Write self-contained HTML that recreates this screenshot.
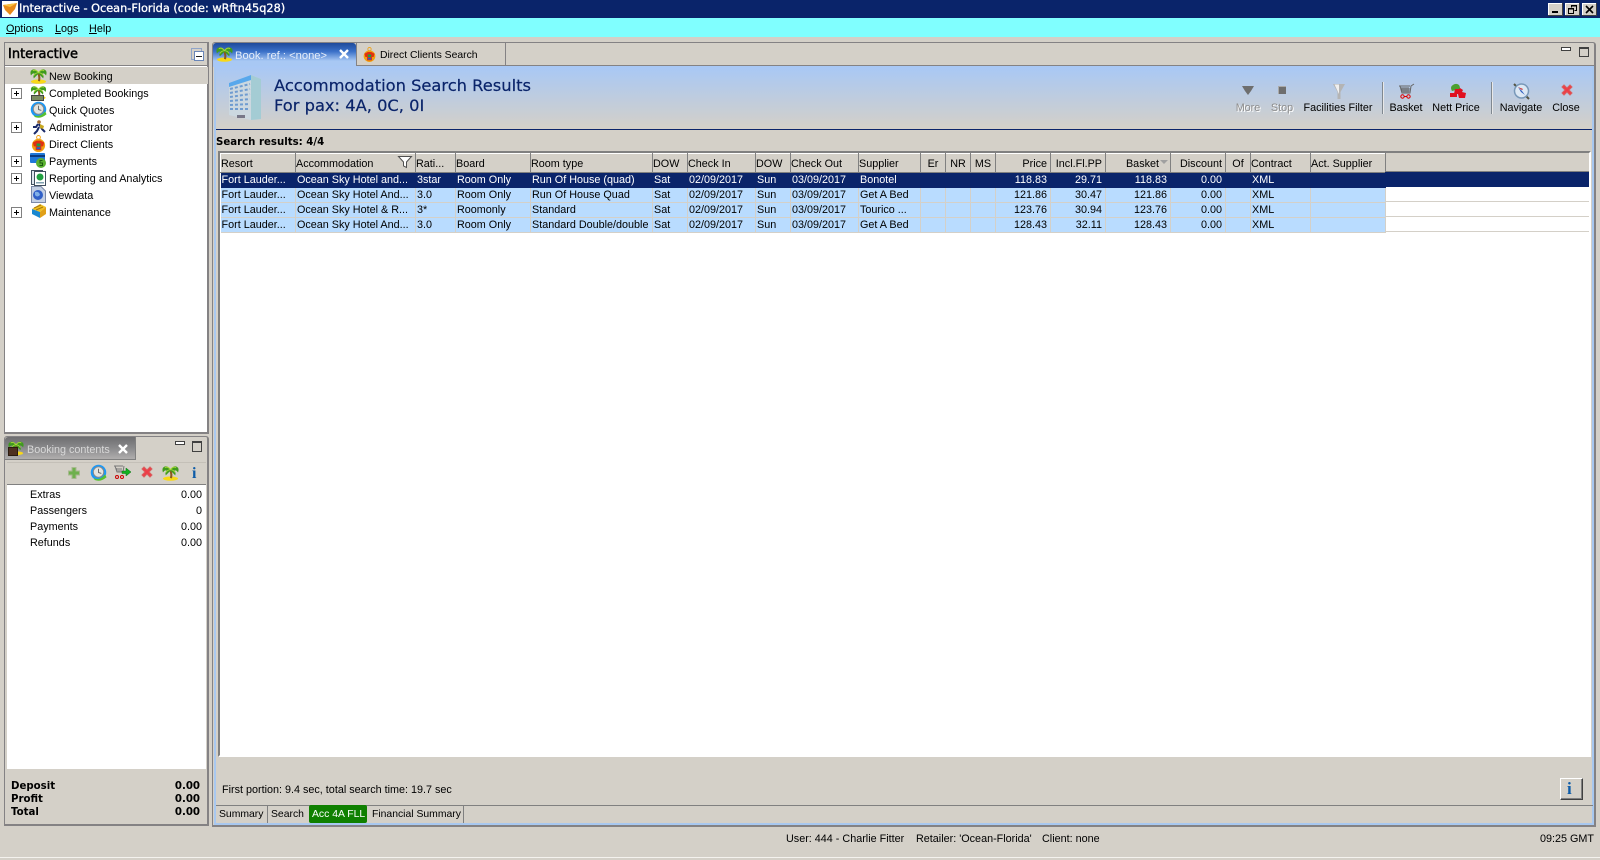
<!DOCTYPE html>
<html><head><meta charset="utf-8"><title>Interactive</title>
<style>
html,body{margin:0;padding:0;width:1600px;height:860px;overflow:hidden;background:#d4d0c8}
body{position:relative;font:10.8px "Liberation Sans",Arial,sans-serif;color:#000}
.a,.t{position:absolute}
.t{white-space:nowrap;line-height:14px;margin-top:1px}
.m0{margin-top:0}
u{text-decoration:underline}
.nav{left:49px}
.plus{position:absolute;left:11px;width:9px;height:9px;border:1px solid #808080;background:#fff}
.plus:before{content:"";position:absolute;left:2px;top:4px;width:5px;height:1px;background:#000}
.plus:after{content:"";position:absolute;left:4px;top:2px;width:1px;height:5px;background:#000}
.r{text-align:right}
.tb{font-size:10.4px}
svg{position:absolute;overflow:visible}
table{position:absolute;left:220px;top:153px;border-collapse:collapse;table-layout:fixed;width:1165px;font:10.8px "Liberation Sans",sans-serif}
th{height:19px;padding:2px 0 0 0;background:#d4d0c8;font-weight:normal;text-align:left;border:1px solid;border-color:#fff #808080 #808080 #fff;box-sizing:border-box;white-space:nowrap;overflow:hidden}
td{height:15px;padding:0 2px 0 1px;background:#b9dcff;border-right:1px solid #d4d0c8;border-bottom:1px solid #d4d0c8;box-sizing:border-box;white-space:nowrap;overflow:hidden;line-height:14px}
tr.s td{background:#0a246a;color:#fff;border-color:#0a246a}
th.n,td.n{text-align:right;padding-right:3px}
th.c{text-align:center;padding:2px 0 0 0}
.lab{position:absolute;top:101px;text-align:center;width:100px;line-height:14px}
.dis{color:#8d8d8d;text-shadow:1px 1px 0 #fff}
.b{font:bold 10.2px/14px 'DejaVu Sans',sans-serif}
</style></head><body>
<svg width="0" height="0" style="position:absolute"><defs>
<symbol id="palm" viewBox="0 0 18 18"><ellipse cx="9" cy="15.500" rx="8" ry="2.200" fill="#f8d818"/><path d="M9 7Q10.500 11 9.500 15" stroke="#8a5a20" stroke-width="2.200" fill="none"/><path d="M9 6Q5 0 1 4Q0 6 1 9Q3 6 5 7Q3 9 4 12Q7 9 9 7Q11 9 14 12Q15 9 13 7Q15 6 17 9Q18 6 17 4Q13 0 9 6Z" fill="#3f9a1e"/><path d="M9 6Q6 2 3 4M9 6Q12 2 15 4M9 6Q6 6 4 9M9 6Q12 6 14 9" stroke="#a8d838" stroke-width="1" fill="none"/></symbol>
<symbol id="clock" viewBox="0 0 18 18"><circle cx="9" cy="9" r="8.200" fill="#1e98f4"/><circle cx="9" cy="8.500" r="5.500" fill="#e4e4e0" stroke="#888"/><path d="M9 5V9L12 10" stroke="#666" fill="none"/><path d="M4 15Q10 18 16 11L17.500 14Q11 19.500 5 17Z" fill="#58c030"/></symbol>
<symbol id="xr" viewBox="0 0 14 14"><path d="M2 4L4 2L7 5L10 2L12 4L9 7L12 10L10 12L7 9L4 12L2 10L5 7Z" fill="#ee3c46" stroke="#d86060"/></symbol>
<symbol id="shirt" viewBox="0 0 18 18"><circle cx="9" cy="2.500" r="2" fill="none" stroke="#f0a010"/><circle cx="9" cy="11" r="7" fill="#f0a010"/><path d="M3 8L7 6H11L15 8L14 12H12V16H6V12H4Z" fill="#e03010"/><rect x="7" y="9" width="4" height="3" fill="#1ea040"/><rect x="7" y="13" width="4" height="2" fill="#2060d0"/></symbol>
</defs></svg>

<!-- title bar -->
<div class="a" style="left:0;top:0;width:1600px;height:18px;background:#0a246a"></div>
<div class="a" style="left:2px;top:1px;width:16px;height:16px;background:#fff"></div>
<svg style="left:2px;top:2px" width="16" height="14"><path d="M1 3L15 1L13 7L8 13L3 8Z" fill="#e88a1a"/><path d="M1 3L15 1L8 5Z" fill="#f8c040"/></svg>
<div class="t m0" style="left:19px;top:2px;color:#fff;font:11.3px/14px 'DejaVu Sans',sans-serif;-webkit-text-stroke:.3px #fff">Interactive - Ocean-Florida (code: wRftn45q28)</div>
<div class="a" style="left:1548px;top:3px;width:15px;height:13px;background:#d4d0c8;border-right:1px solid #404040;border-bottom:1px solid #404040;box-sizing:border-box;box-shadow:inset 1px 1px #fff"></div>
<div class="a" style="left:1552px;top:11px;width:6px;height:2px;background:#000"></div>
<div class="a" style="left:1565px;top:3px;width:15px;height:13px;background:#d4d0c8;border-right:1px solid #404040;border-bottom:1px solid #404040;box-sizing:border-box;box-shadow:inset 1px 1px #fff"></div>
<svg style="left:1568px;top:5px" width="10" height="9"><path d="M3.500 2.500V.5H8.500V5.500H6.500M.5 3.500H5.500V8.500H.5Z" fill="none" stroke="#000"/><path d="M3 1H9M0 4H6" stroke="#000"/></svg>
<div class="a" style="left:1582px;top:3px;width:15px;height:13px;background:#d4d0c8;border-right:1px solid #404040;border-bottom:1px solid #404040;box-sizing:border-box;box-shadow:inset 1px 1px #fff"></div>
<svg style="left:1585px;top:5px" width="9" height="9"><path d="M1 1L8 8M8 1L1 8" stroke="#000" stroke-width="1.600"/></svg>

<!-- menu -->
<div class="a" style="left:0;top:18px;width:1600px;height:19px;background:#80ffff"></div>
<div class="t" style="left:6px;top:21px"><u>O</u>ptions</div>
<div class="t" style="left:55px;top:21px"><u>L</u>ogs</div>
<div class="t" style="left:89px;top:21px"><u>H</u>elp</div>

<!-- left nav panel -->
<div class="a" style="left:4px;top:42px;width:205px;height:392px;border:1px solid #848284;border-width:1px 2px 2px 1px;box-sizing:border-box;background:#fff"></div>
<div class="a" style="left:5px;top:43px;width:202px;height:22px;background:#d4d0c8;border-bottom:1px solid #848284"></div>
<div class="t" style="left:8px;top:46px;font:13px/15px 'DejaVu Sans',sans-serif;-webkit-text-stroke:.45px #000">Interactive</div>
<div class="a" style="left:191px;top:48px;width:9px;height:10px;border:1px solid #8fa4c8"></div>
<div class="a" style="left:194px;top:51px;width:8px;height:8px;border:1px solid #6a86b8;background:#fff"></div>
<div class="a" style="left:196px;top:56px;width:6px;height:1px;background:#222"></div>
<div class="a" style="left:5px;top:67px;width:203px;height:17px;background:#d4d0c8"></div>

<svg style="left:30px;top:67px" width="17" height="17"><use href="#palm"/></svg>
<div class="t nav" style="top:69px">New Booking</div>
<div class="plus" style="top:88px"></div>
<svg style="left:30px;top:84px" width="17" height="16"><use href="#palm"/></svg>
<div class="a" style="left:31px;top:95px;width:13px;height:6px;background:#7a8a60;border:1px solid #444;box-sizing:border-box"></div>
<div class="t nav" style="top:86px">Completed Bookings</div>
<svg style="left:30px;top:101px" width="17" height="17"><use href="#clock"/></svg>
<div class="t nav" style="top:103px">Quick Quotes</div>
<div class="plus" style="top:122px"></div>
<svg style="left:31px;top:119px" width="16" height="16"><circle cx="8" cy="3" r="1.800" fill="#a06a30"/><path d="M7 5L5 8L2 8M8 5L11 10L14 13M8 8L6 12L3 15" stroke="#1a2a6a" stroke-width="2" fill="none"/><path d="M9 5L13 7L12 10L9 9Z" fill="#c8a820"/></svg>
<div class="t nav" style="top:120px">Administrator</div>
<svg style="left:30px;top:135px" width="17" height="17"><use href="#shirt"/></svg>
<div class="t nav" style="top:137px">Direct Clients</div>
<div class="plus" style="top:156px"></div>
<svg style="left:30px;top:152px" width="17" height="17"><rect y="1" width="15" height="10" rx="1" fill="#1f78d8"/><rect y="3" width="15" height="2" fill="#0a3a80"/><circle cx="11" cy="11" r="5" fill="#5ab030"/><path d="M12.500 8.500H10V11H12.500V13.500H9.500" stroke="#1a5a10" fill="none"/></svg>
<div class="t nav" style="top:154px">Payments</div>
<div class="plus" style="top:173px"></div>
<svg style="left:31px;top:170px" width="16" height="16"><rect x=".5" y=".5" width="11" height="14" fill="#dfe6ee" stroke="#405060"/><rect x="3.500" y="1.500" width="11" height="14" fill="#fff" stroke="#405060"/><circle cx="9" cy="7" r="3.500" fill="#20a040"/><rect x="5" y="12" width="8" height="1.500" fill="#80a0b0"/></svg>
<div class="t nav" style="top:171px">Reporting and Analytics</div>
<svg style="left:31px;top:186px" width="15" height="17"><path d="M.5.5H10L14.500 5V16.500H.5Z" fill="#c4d0e4" stroke="#7c8aa8"/><circle cx="7" cy="9" r="5" fill="#3060c8"/><path d="M4 6Q8 5 9 9Q6 12 4 9Z" fill="#80b0e8"/></svg>
<div class="t nav" style="top:188px">Viewdata</div>
<div class="plus" style="top:207px"></div>
<svg style="left:31px;top:203px" width="17" height="17"><path d="M1 6L9 1L15 4L9 9Z" fill="#f0c020"/><path d="M1 6V11L9 15V9Z" fill="#1a88d0"/><path d="M9 9V15L15 11V4Z" fill="#e0a018"/><path d="M3 5L10 2M5 7L12 4" stroke="#a87810"/></svg>
<div class="t nav" style="top:205px">Maintenance</div>

<!-- booking panel -->
<div class="a" style="left:4px;top:436px;width:205px;height:390px;border:1px solid #848284;border-width:1px 2px 2px 1px;box-sizing:border-box;background:#d4d0c8;border-radius:3px 3px 0 0"></div>
<div class="a" style="left:5px;top:437px;width:131px;height:23px;background:linear-gradient(#6e6e70,#8a8a8c 50%,#b0aeae);border-right:1px solid #808080;border-bottom:1px solid #808080;box-sizing:border-box;border-radius:3px 0 0 0"></div>
<svg style="left:8px;top:439px" width="16" height="17"><use href="#palm"/></svg>
<div class="a" style="left:8px;top:447px;width:10px;height:9px;background:#4e3020;border:1px solid #2c1c10;box-sizing:border-box"></div>
<div class="t" style="left:27px;top:442px;color:#d8d8d8">Booking contents</div>
<svg style="left:118px;top:444px" width="10" height="10"><path d="M1 1L9 9M9 1L1 9" stroke="#fff" stroke-width="2.400"/></svg>
<div class="a" style="left:175px;top:441px;width:8px;height:2px;border:1px solid #404040;background:#fff"></div>
<div class="a" style="left:192px;top:441px;width:8px;height:8px;border:1px solid #404040;border-top-width:2px;background:#d4d0c8"></div>
<div class="a" style="left:7px;top:462px;width:199px;height:23px;background:#d4d0c8;box-shadow:inset 0 -1px #808080,inset 0 1px #c4c0b8"></div>
<svg style="left:67px;top:466px" width="14" height="14"><path d="M5 1.500H9V5H12.500V9H9V12.500H5V9H1.500V5H5Z" fill="#6fb04e" stroke="#a8b890"/></svg>
<svg style="left:90px;top:464px" width="17" height="17"><use href="#clock"/></svg>
<svg style="left:114px;top:465px" width="17" height="15"><path d="M0 1H9M1 1L3 7H9L10 1M3 3V7M5 3V7M7 3V7" stroke="#777" fill="none"/><circle cx="3" cy="12" r="1.500" fill="none" stroke="#c00"/><circle cx="8" cy="12" r="1.500" fill="none" stroke="#c00"/><path d="M8 6H12V3L17 7L12 11V8.500H8Z" fill="#10b020" stroke="#0a7010" stroke-width=".5"/></svg>
<svg style="left:140px;top:465px" width="14" height="14"><use href="#xr"/></svg>
<svg style="left:162px;top:464px" width="17" height="17"><use href="#palm"/></svg>
<div class="t m0" style="left:192px;top:465px;font:bold 16px/17px 'Liberation Serif',serif;color:#0e5ca8">i</div>
<div class="a" style="left:7px;top:485px;width:199px;height:284px;background:#fff"></div>
<div class="t" style="left:30px;top:487px">Extras</div><div class="t r" style="right:1398px;top:487px">0.00</div>
<div class="t" style="left:30px;top:503px">Passengers</div><div class="t r" style="right:1398px;top:503px">0</div>
<div class="t" style="left:30px;top:519px">Payments</div><div class="t r" style="right:1398px;top:519px">0.00</div>
<div class="t" style="left:30px;top:535px">Refunds</div><div class="t r" style="right:1398px;top:535px">0.00</div>
<div class="t b" style="left:11px;top:779px">Deposit</div><div class="t r b" style="right:1400px;top:779px">0.00</div>
<div class="t b" style="left:11px;top:792px">Profit</div><div class="t r b" style="right:1400px;top:792px">0.00</div>
<div class="t b" style="left:11px;top:805px">Total</div><div class="t r b" style="right:1400px;top:805px">0.00</div>

<!-- main panel -->
<div class="a" style="left:212px;top:42px;width:1384px;height:785px;border:1px solid #848284;border-width:1px 2px 2px 1px;box-sizing:border-box;background:#d4d0c8;border-radius:3px 3px 0 0"></div>
<div class="a" style="left:214px;top:66px;width:2px;height:758px;background:#a8c8f0"></div>
<div class="a" style="left:1592px;top:66px;width:2px;height:758px;background:#a8c8f0"></div>
<div class="a" style="left:214px;top:823px;width:1380px;height:2px;background:#a8c8f0"></div>
<div class="a" style="left:213px;top:65px;width:1381px;height:1px;background:#848284"></div>
<!-- tabs -->
<div class="a" style="left:213px;top:43px;width:143px;height:24px;background:linear-gradient(#1f4a9a,#3a70c8 35%,#a8c8f4 75%);border-radius:3px 3px 0 0"></div>
<svg style="left:216px;top:45px" width="17" height="17"><use href="#palm"/></svg>
<div class="t" style="left:235px;top:48px;color:#e6eefa;font-size:11.2px">Book. ref.: &lt;none&gt;</div>
<svg style="left:339px;top:49px" width="10" height="10"><path d="M1 1L9 9M9 1L1 9" stroke="#fff" stroke-width="2.400"/></svg>
<div class="a" style="left:356px;top:43px;width:150px;height:22px;border-right:1px solid #848284;box-sizing:border-box"></div>
<div class="a" style="left:356px;top:43px;width:1px;height:23px;background:#848284"></div>
<svg style="left:362px;top:46px" width="15" height="17"><use href="#shirt"/></svg>
<div class="t tb" style="left:380px;top:48px">Direct Clients Search</div>
<div class="a" style="left:1561px;top:47px;width:8px;height:2px;border:1px solid #404040;background:#fff"></div>
<div class="a" style="left:1579px;top:47px;width:8px;height:7px;border:1px solid #404040;border-top-width:2px;background:#d4d0c8"></div>
<!-- header band -->
<div class="a" style="left:216px;top:66px;width:1376px;height:63px;background:linear-gradient(#a8c8f6,#d4d0c8)"></div>
<div class="a" style="left:216px;top:129px;width:1376px;height:1px;background:#0a246a"></div>
<svg style="left:227px;top:73px" width="36" height="48"><path d="M2 10L24 2L34 6V46L24 47L2 42Z" fill="#ccd8e0"/><path d="M24 2L34 6V46L24 47Z" fill="#a4ccd4"/><path d="M2 10L24 2V7L2 14Z" fill="#58a8ec"/><g stroke="#6f9cd0" stroke-width="2" stroke-dasharray="3 2"><path d="M3 16L23 11M3 20L23 16M3 24L23 21M3 28L23 26M3 32L23 31M3 36L23 36"/></g><path d="M10 42H18V45H10Z" fill="#778"/></svg>
<div class="t m0" style="left:274px;top:76px;font:16.300px/19px 'DejaVu Sans',sans-serif;color:#0a246a;-webkit-text-stroke:.2px #0a246a">Accommodation Search Results</div>
<div class="t m0" style="left:274px;top:96px;font:16.300px/19px 'DejaVu Sans',sans-serif;color:#0a246a;-webkit-text-stroke:.2px #0a246a">For pax: 4A, 0C, 0I</div>
<!-- toolbar -->
<svg style="left:1241px;top:84px" width="14" height="12"><path d="M1 2H13L10 7L7 11L4 7Z" fill="#6e6e6e"/></svg>
<div class="a" style="left:1278px;top:86px;width:8px;height:8px;background:#6e6e6e;box-shadow:inset 1px 1px #aaa"></div>
<svg style="left:1332px;top:83px" width="14" height="17"><path d="M1 1H13L8.500 9V16H5.500V9Z" fill="#b4b4b4"/><path d="M2.500 1.500H7L7 11Z" fill="#f0f0f0"/></svg>
<svg style="left:1399px;top:83px" width="16" height="17"><path d="M0 3H11M1 3L3 10H11L12 3L15 1M3 4V10M5 4V10M7 4V10M9 4V10M3 8H11M2 6H12" stroke="#666" fill="none"/><circle cx="3.500" cy="13.500" r="1.700" fill="none" stroke="#d00"/><circle cx="9.500" cy="13.500" r="1.700" fill="none" stroke="#d00"/><path d="M5 13.500H8" stroke="#d00"/></svg>
<svg style="left:1449px;top:83px" width="18" height="17"><path d="M3 8Q0 3 6 1Q11 0 11 6Z" fill="#4ca030"/><path d="M6 6H10L11 5L14 7L13 9L17 10L16 15H10L9 11H5Z" fill="#e01020"/><rect x="1" y="10" width="7" height="4" fill="#e01020"/></svg>
<svg style="left:1513px;top:82px" width="17" height="18"><path d="M1 2L4 5M13 14L16 17" stroke="#554" stroke-width="2"/><circle cx="8.500" cy="9" r="7" fill="#dce8f4" stroke="#7898b8" stroke-width="1.500"/><path d="M5 5L9 9L12 13L8 10Z" fill="#3060c0"/><path d="M5 5L9 8L10 7Z" fill="#d02020"/></svg>
<svg style="left:1560px;top:83px" width="14" height="14"><use href="#xr"/></svg>
<div class="lab dis" style="left:1198px">More</div>
<div class="lab dis" style="left:1232px">Stop</div>
<div class="lab" style="left:1288px">Facilities Filter</div>
<div class="lab" style="left:1356px">Basket</div>
<div class="lab" style="left:1406px">Nett Price</div>
<div class="lab" style="left:1471px">Navigate</div>
<div class="lab" style="left:1516px">Close</div>
<div class="a" style="left:1382px;top:82px;width:1px;height:32px;background:#808890;box-shadow:1px 0 #e8e8e8"></div>
<div class="a" style="left:1491px;top:82px;width:1px;height:32px;background:#808890;box-shadow:1px 0 #e8e8e8"></div>

<div class="t b" style="left:216px;top:135px">Search results: 4/4</div>

<!-- grid -->
<div class="a" style="left:218px;top:151px;width:1373px;height:606px;background:#fff;border:2px solid;border-color:#808080 #fff #fff #808080;box-sizing:border-box;outline:1px solid #d4d0c8"></div>
<div class="a" style="left:220px;top:153px;width:1369px;height:19px;background:#d4d0c8;border-bottom:1px solid #808080;box-sizing:border-box"></div>
<table><colgroup><col style="width:75px"><col style="width:120px"><col style="width:40px"><col style="width:75px"><col style="width:122px"><col style="width:35px"><col style="width:68px"><col style="width:35px"><col style="width:68px"><col style="width:62px"><col style="width:25px"><col style="width:25px"><col style="width:25px"><col style="width:55px"><col style="width:55px"><col style="width:65px"><col style="width:55px"><col style="width:25px"><col style="width:60px"><col style="width:75px"></colgroup>
<tr><th>Resort</th><th>Accommodation</th><th>Rati...</th><th>Board</th><th>Room type</th><th>DOW</th><th>Check In</th><th>DOW</th><th>Check Out</th><th>Supplier</th><th class="c">Er</th><th class="c">NR</th><th class="c">MS</th><th class="n">Price</th><th class="n">Incl.Fl.PP</th><th class="n" style="padding-right:11px">Basket</th><th class="n">Discount</th><th class="c">Of</th><th>Contract</th><th>Act. Supplier</th></tr>
<tr class="s"><td>Fort Lauder...</td><td>Ocean Sky Hotel and...</td><td>3star</td><td>Room Only</td><td>Run Of House (quad)</td><td>Sat</td><td>02/09/2017</td><td>Sun</td><td>03/09/2017</td><td>Bonotel</td><td></td><td></td><td></td><td class="n">118.83</td><td class="n">29.71</td><td class="n">118.83</td><td class="n">0.00</td><td></td><td>XML</td><td></td></tr>
<tr><td>Fort Lauder...</td><td>Ocean Sky Hotel And...</td><td>3.0</td><td>Room Only</td><td>Run Of House Quad</td><td>Sat</td><td>02/09/2017</td><td>Sun</td><td>03/09/2017</td><td>Get A Bed</td><td></td><td></td><td></td><td class="n">121.86</td><td class="n">30.47</td><td class="n">121.86</td><td class="n">0.00</td><td></td><td>XML</td><td></td></tr>
<tr><td>Fort Lauder...</td><td>Ocean Sky Hotel &amp; R...</td><td>3*</td><td>Roomonly</td><td>Standard</td><td>Sat</td><td>02/09/2017</td><td>Sun</td><td>03/09/2017</td><td>Tourico ...</td><td></td><td></td><td></td><td class="n">123.76</td><td class="n">30.94</td><td class="n">123.76</td><td class="n">0.00</td><td></td><td>XML</td><td></td></tr>
<tr><td>Fort Lauder...</td><td>Ocean Sky Hotel And...</td><td>3.0</td><td>Room Only</td><td>Standard Double/double</td><td>Sat</td><td>02/09/2017</td><td>Sun</td><td>03/09/2017</td><td>Get A Bed</td><td></td><td></td><td></td><td class="n">128.43</td><td class="n">32.11</td><td class="n">128.43</td><td class="n">0.00</td><td></td><td>XML</td><td></td></tr>
</table>
<div class="a" style="left:1385px;top:172px;width:204px;height:15px;background:#0a246a"></div>
<div class="a" style="left:1385px;top:201px;width:204px;height:1px;background:#d4d0c8"></div>
<div class="a" style="left:1385px;top:216px;width:204px;height:1px;background:#d4d0c8"></div>
<div class="a" style="left:1385px;top:231px;width:204px;height:1px;background:#d4d0c8"></div>
<svg style="left:398px;top:156px" width="14" height="12"><path d="M.5.5H13.500L8.500 6V11.500L5.500 10V6Z" fill="#fff" stroke="#505050"/></svg>
<svg style="left:1160px;top:160px" width="8" height="5"><path d="M0 0H8L4 4Z" fill="#a0a0a0"/></svg>

<div class="t" style="left:222px;top:782px">First portion: 9.4 sec, total search time: 19.7 sec</div>
<div class="a" style="left:1560px;top:778px;width:23px;height:22px;background:#d4d0c8;border:1px solid;border-color:#fff #404040 #404040 #fff;box-sizing:border-box;box-shadow:inset -1px -1px #808080"></div>
<div class="t m0" style="left:1567px;top:780px;font:bold 17px/18px 'Liberation Serif',serif;color:#0e5ca8">i</div>

<!-- bottom tabs -->
<div class="a" style="left:216px;top:805px;width:1377px;height:1px;background:#808080"></div>
<div class="t tb" style="left:219px;top:807px">Summary</div>
<div class="a" style="left:267px;top:806px;width:1px;height:17px;background:#808080"></div>
<div class="t tb" style="left:271px;top:807px">Search</div>
<div class="a" style="left:309px;top:805px;width:58px;height:18px;background:#0f8000;border-radius:2px"></div>
<div class="t tb" style="left:312px;top:807px;color:#fff">Acc 4A FLL</div>
<div class="t tb" style="left:372px;top:807px">Financial Summary</div>
<div class="a" style="left:463px;top:806px;width:1px;height:17px;background:#808080"></div>

<!-- status -->
<div class="t" style="left:786px;top:831px">User: 444 - Charlie Fitter</div>
<div class="t" style="left:916px;top:831px">Retailer: 'Ocean-Florida'</div>
<div class="t" style="left:1042px;top:831px">Client: none</div>
<div class="t" style="left:1540px;top:831px">09:25 GMT</div>
<div class="a" style="left:0;top:857px;width:1600px;height:1px;background:#f4f2ee"></div>
</body></html>
